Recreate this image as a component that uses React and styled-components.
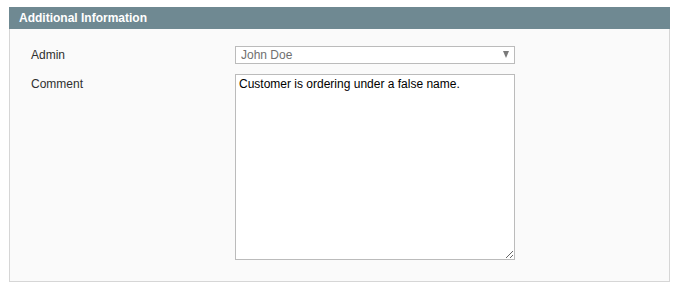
import React from 'react';
import styled, { createGlobalStyle } from 'styled-components';

const GlobalStyle = createGlobalStyle`
  html, body {
    margin: 0;
    padding: 0;
    background: #ffffff;
  }
  body {
    font-family: Arial, "Liberation Sans", sans-serif;
    font-size: 12px;
    color: #2f2f2f;
  }
`;

const Page = styled.div`
  padding: 7px 10px 0 9px;
  width: 661px;
`;

const Head = styled.div`
  height: 22px;
  background: #6f8992;
  color: #ffffff;
  font-weight: bold;
  font-size: 12px;
  line-height: 22px;
  padding-left: 10px;
`;

const Fieldset = styled.div`
  background: #fafafa;
  border: 1px solid #d6d6d6;
  border-top: none;
  padding: 17px 0 21px 21px;
  display: grid;
  grid-template-columns: 204px 280px;
  row-gap: 10px;
`;

const Label = styled.label`
  color: #2f2f2f;
  font-size: 12px;
  line-height: ${({ $tall }) => ($tall ? '16px' : '18px')};
  padding-top: ${({ $tall }) => ($tall ? '2px' : '0')};
`;

const SelectWrap = styled.div`
  position: relative;
  height: 18px;
`;

const Select = styled.select`
  appearance: none;
  -webkit-appearance: none;
  box-sizing: border-box;
  width: 280px;
  height: 18px;
  margin: 0;
  padding: 0 0 0 5px;
  border: 1px solid #bbbbbb;
  border-radius: 0;
  background: #ffffff;
  color: #707070;
  font-family: Arial, "Liberation Sans", sans-serif;
  font-size: 12px;
  line-height: 16px;
  outline: none;
`;

const Arrow = styled.span`
  position: absolute;
  right: 6px;
  top: 5px;
  width: 0;
  height: 0;
  border-left: 3.5px solid transparent;
  border-right: 3.5px solid transparent;
  border-top: 7px solid #7a7a7a;
  pointer-events: none;
`;

const TextArea = styled.textarea`
  box-sizing: border-box;
  width: 280px;
  height: 186px;
  margin: 0;
  padding: 2px 3px;
  border: 1px solid #bbbbbb;
  border-radius: 0;
  background: #ffffff;
  color: #000000;
  font-family: Arial, "Liberation Sans", sans-serif;
  font-size: 12px;
  line-height: 15px;
  outline: none;
  display: block;
`;

export default function App() {
  return (
    <>
      <GlobalStyle />
      <Page>
        <Head>Additional Information</Head>
        <Fieldset>
          <Label htmlFor="admin">Admin</Label>
          <SelectWrap>
            <Select id="admin" defaultValue="john">
              <option value="john">John Doe</option>
            </Select>
            <Arrow />
          </SelectWrap>
          <Label htmlFor="comment" $tall>
            Comment
          </Label>
          <TextArea id="comment" defaultValue="Customer is ordering under a false name." />
        </Fieldset>
      </Page>
    </>
  );
}
